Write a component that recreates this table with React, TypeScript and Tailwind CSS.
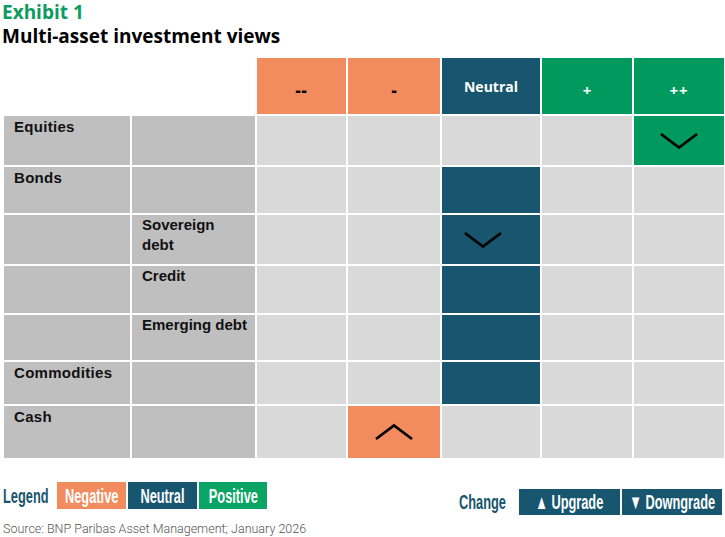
import React from 'react';

type Tone = 'neg' | 'neu' | 'pos';

interface Row {
  main: string;
  sub: string;
  col: number;
  tone: Tone;
  arrow?: 'up' | 'down';
  shift?: boolean;
}

const rows: Row[] = [
  { main: 'Equities', sub: '', col: 4, tone: 'pos', arrow: 'down' },
  { main: 'Bonds', sub: '', col: 2, tone: 'neu' },
  { main: '', sub: 'Sovereign\ndebt', col: 2, tone: 'neu', arrow: 'down', shift: true },
  { main: '', sub: 'Credit', col: 2, tone: 'neu' },
  { main: '', sub: 'Emerging debt', col: 2, tone: 'neu' },
  { main: 'Commodities', sub: '', col: 2, tone: 'neu' },
  { main: 'Cash', sub: '', col: 1, tone: 'neg', arrow: 'up' }
];

const toneBg: Record<Tone, string> = {
  neg: 'bg-[#f28b5e]',
  neu: 'bg-[#17566e]',
  pos: 'bg-[#009a5f]'
};

const narrow = { fontFamily: '"Liberation Sans", Arial, sans-serif' };
const title = { fontFamily: '"Open Sans", "Noto Sans", sans-serif' };
const label = { fontFamily: '"Liberation Sans", Arial, sans-serif' };

const Chevron: React.FC<{ dir: 'up' | 'down' }> = ({ dir }) => (
  <svg width="40" height="18" viewBox="0 0 40 18" fill="none">
    <polyline
      points={dir === 'down' ? '2,2 20,15.5 38,2' : '2,16 20,2.5 38,16'}
      stroke="#000"
      strokeWidth="2.8"
    />
  </svg>
);

// legend chip, bold text squeezed to mimic the narrow face of the report
const Chip: React.FC<{ bg: string; w: string; h: string; children: React.ReactNode }> = ({ bg, w, h, children }) => (
  <span className={`${bg} ${w} ${h} flex items-center justify-center overflow-hidden`}>
    <span className="inline-block scale-x-[0.64] whitespace-nowrap text-white font-bold text-[20px] leading-none">{children}</span>
  </span>
);

const App: React.FC = () => (
  <div className="w-[725px] h-[537px] bg-white overflow-hidden">
    <div className="pl-[2px]" style={title}>
      <div className="text-[19px] leading-[24px] font-bold text-[#0c9b62]">Exhibit 1</div>
      <div className="text-[19px] leading-[25px] font-bold text-black">Multi-asset investment views</div>
    </div>

    <div className="ml-[4px] mt-[9px] grid gap-[2px] grid-cols-[126px_123px_89px_92px_98px_90px_90px] grid-rows-[56px_49px_46px_49px_47px_45px_42px_52px]">
      <div />
      <div />
      <div className="bg-[#f28b5e] flex items-center justify-center pt-[8px] text-black font-extrabold text-[16px] tracking-[1px]" style={title}>--</div>
      <div className="bg-[#f28b5e] flex items-center justify-center pt-[8px] text-black font-extrabold text-[16px]" style={title}>-</div>
      <div className="bg-[#17566e] flex items-center justify-center text-white font-bold text-[14px]" style={title}>Neutral</div>
      <div className="bg-[#009a5f] flex items-center justify-center pt-[8px] text-white font-bold text-[15px]" style={title}>+</div>
      <div className="bg-[#009a5f] flex items-center justify-center pt-[8px] text-white font-bold text-[15px] tracking-[1px]" style={title}>++</div>

      {rows.map((r) => (
        <React.Fragment key={r.main + r.sub}>
          <div className="bg-[#bfbfbf] pl-[10px] pt-[1px] text-[15px] leading-[20px] font-bold text-[#111] tracking-[0.3px]" style={label}>
            {r.main}
          </div>
          <div className="bg-[#bfbfbf] pl-[10px] text-[15px] leading-[20px] font-bold text-[#111] whitespace-pre-line" style={label}>
            {r.sub}
          </div>
          {[0, 1, 2, 3, 4].map((c) => (
            <div
              key={c}
              className={`flex items-center justify-center ${c === r.col ? toneBg[r.tone] : 'bg-[#d9d9d9]'} ${
                c === r.col && r.shift ? 'pr-[16px]' : ''
              }`}
            >
              {c === r.col && r.arrow ? <Chevron dir={r.arrow} /> : null}
            </div>
          ))}
        </React.Fragment>
      ))}
    </div>

    <div className="mt-[24px] flex items-start" style={narrow}>
      <div className="flex items-center pl-[3px]">
        <span className="w-[54px] h-[27px] flex items-center">
          <span className="inline-block origin-left scale-x-[0.64] font-bold text-[20px] text-[#17566e] leading-none whitespace-nowrap">Legend</span>
        </span>
        <div className="flex gap-[2px]">
          <Chip bg="bg-[#f28b5e]" w="w-[69px]" h="h-[27px]">Negative</Chip>
          <Chip bg="bg-[#17566e]" w="w-[69px]" h="h-[27px]">Neutral</Chip>
          <Chip bg="bg-[#0aa565]" w="w-[68px]" h="h-[27px]">Positive</Chip>
        </div>
      </div>
      <div className="ml-auto mr-[3px] mt-[7px] flex items-center">
        <span className="w-[60px] h-[26px] flex items-center">
          <span className="inline-block origin-left scale-x-[0.64] font-bold text-[20px] text-[#17566e] leading-none whitespace-nowrap">Change</span>
        </span>
        <div className="flex gap-[2px]">
          <Chip bg="bg-[#17566e]" w="w-[101px]" h="h-[26px]">▲ Upgrade</Chip>
          <Chip bg="bg-[#17566e]" w="w-[100px]" h="h-[26px]">▼ Downgrade</Chip>
        </div>
      </div>
    </div>

    <div className="pl-[3px] mt-[6px] text-[12.5px] leading-[16px] text-[#555]" style={{ fontFamily: 'Roboto, "Open Sans", sans-serif', fontWeight: 300 }}>
      Source: BNP Paribas Asset Management; January 2026
    </div>
  </div>
);

export default App;
